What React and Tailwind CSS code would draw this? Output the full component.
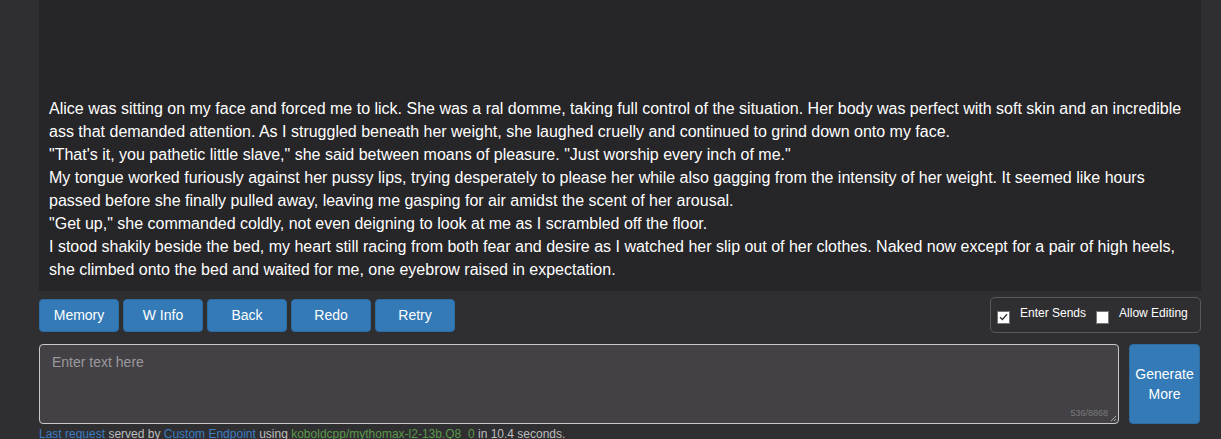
const story = [
  "Alice was sitting on my face and forced me to lick. She was a ral domme, taking full control of the situation. Her body was perfect with soft skin and an incredible ass that demanded attention. As I struggled beneath her weight, she laughed cruelly and continued to grind down onto my face.",
  "\"That's it, you pathetic little slave,\" she said between moans of pleasure. \"Just worship every inch of me.\"",
  "My tongue worked furiously against her pussy lips, trying desperately to please her while also gagging from the intensity of her weight. It seemed like hours passed before she finally pulled away, leaving me gasping for air amidst the scent of her arousal.",
  "\"Get up,\" she commanded coldly, not even deigning to look at me as I scrambled off the floor.",
  "I stood shakily beside the bed, my heart still racing from both fear and desire as I watched her slip out of her clothes. Naked now except for a pair of high heels, she climbed onto the bed and waited for me, one eyebrow raised in expectation.",
];

const buttons = ["Memory", "W Info", "Back", "Redo", "Retry"];

const CheckBox = ({ checked }) => (
  <span className="w-[13px] h-[13px] bg-white border border-[#767676] flex items-center justify-center">
    {checked && (
      <svg width="9" height="8" viewBox="0 0 9 8">
        <path d="M1 4.2 L3.4 6.5 L8 1.2" fill="none" stroke="#333" strokeWidth="1.3" />
      </svg>
    )}
  </span>
);

export default function App() {
  return (
    <div
      className="h-[439px] bg-[#2f2e31] overflow-hidden"
      style={{ fontFamily: '"Liberation Sans", Arial, sans-serif' }}
    >
      <div className="ml-[39px] w-[1162px] flex flex-col">
        {/* story area */}
        <div className="shrink-0 h-[291px] bg-[#262528] flex flex-col justify-end px-[10px] pb-[10px]">
          <div className="text-white text-[16px] leading-[23px]">
            {story.map((p, i) => (
              <div key={i}>{p}</div>
            ))}
          </div>
        </div>

        {/* controls row */}
        <div className="shrink-0 flex items-start justify-between mt-[6px]">
          <div className="flex gap-[4px] mt-[2px]">
            {buttons.map((b) => (
              <button
                key={b}
                className="w-[80px] h-[33px] bg-[#337ab7] border border-[#2e6da4] rounded-[4px] text-white text-[14px]"
              >
                {b}
              </button>
            ))}
          </div>
          <div className="w-[211px] h-[36px] border border-[#59585b] rounded-[5px] flex items-center pl-[6px] pt-[4px] text-white text-[12px]">
            <CheckBox checked />
            <span className="ml-[10px] -mt-[8px]">Enter Sends</span>
            <span className="ml-[10px]">
              <CheckBox />
            </span>
            <span className="ml-[10px] -mt-[8px]">Allow Editing</span>
          </div>
        </div>

        {/* input row */}
        <div className="shrink-0 flex mt-[11px] gap-[10px]">
          <div className="relative w-[1080px] h-[80px] bg-[#434145] border border-[#c8c8c8] rounded-[4px]">
            <div className="pl-[12px] pt-[7px] text-[14px] text-[#9a999c]">Enter text here</div>
            <span className="absolute right-[10px] bottom-[3px] text-[9px] text-[#7a797c]">536/8868</span>
            <svg className="absolute right-[1px] bottom-[1px]" width="7" height="7" viewBox="0 0 7 7">
              <path d="M6 1 L1 6 M6 4 L4 6" stroke="#aaa" strokeWidth="1" />
            </svg>
          </div>
          <button className="w-[71px] h-[80px] bg-[#337ab7] border border-[#2e6da4] rounded-[4px] text-white text-[14px] leading-[20px]">
            Generate
            <br />
            More
          </button>
        </div>

        {/* footer */}
        <div className="shrink-0 mt-[2px] text-[12px] leading-[16px] text-[#bdbdbd] whitespace-nowrap">
          <span className="text-[#3b7cc4]">Last request</span> served by{" "}
          <span className="text-[#3b7cc4]">Custom Endpoint</span> using{" "}
          <span className="text-[#5a9a4a]">koboldcpp/mythomax-l2-13b.Q8_0</span> in 10.4 seconds.
        </div>
      </div>
    </div>
  );
}
